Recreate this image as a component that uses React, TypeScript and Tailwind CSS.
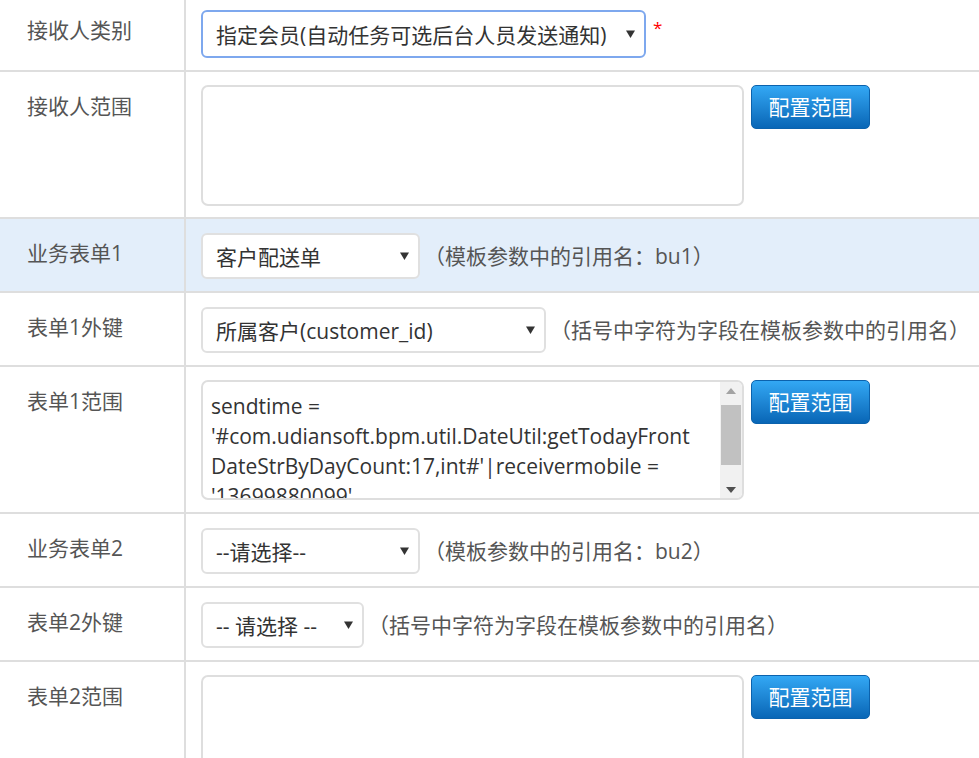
import React from 'react';

const font = "font-['Open_Sans','Noto_Sans_CJK_SC',sans-serif]";

function Arrow() {
  return (
    <svg width="9" height="8" viewBox="0 0 9 8" className="shrink-0">
      <path d="M0 0.5 L9 0.5 L4.5 8 Z" fill="#333" />
    </svg>
  );
}

function FakeSelect({ text, width, focused }: { text: string; width: string; focused?: boolean }) {
  return (
    <div
      className={`${width} ${
        focused ? 'h-[48px] border-2 border-[#7ea8ee]' : 'h-[46px] border-2 border-[#e0e0e0]'
      } flex items-center justify-between rounded-[6px] bg-white pl-[13px] pr-[9px] text-[21px] leading-[28px] text-[#333] whitespace-nowrap`}
    >
      <span className="pt-[2px]">{text}</span>
      <Arrow />
    </div>
  );
}

function ScopeButton() {
  return (
    <button className="ml-[7px] h-[44px] w-[119px] shrink-0 self-start rounded-[5px] border border-[#0b62ad] bg-gradient-to-b from-[#33a8f4] to-[#0866b6] text-[21px] leading-[28px] text-white">
      配置范围
    </button>
  );
}

function Hint({ children }: { children: React.ReactNode }) {
  return <span className="ml-[4px] whitespace-nowrap text-[21px] leading-[28px] text-[#555]">{children}</span>;
}

function Row({
  label,
  children,
  highlight,
  top = 'pt-[14px] pb-[12px]',
}: {
  label: string;
  children: React.ReactNode;
  highlight?: boolean;
  top?: string;
}) {
  return (
    <div className={`flex border-b-2 border-[#dedede] ${highlight ? 'bg-[#e3eefa]' : 'bg-white'}`}>
      <div className="w-[186px] shrink-0 border-r-2 border-[#dedede] pl-[27px] pt-[20px] text-[21px] leading-[28px] text-[#555]">
        {label}
      </div>
      <div className={`flex flex-1 items-center pl-[15px] ${top}`}>{children}</div>
    </div>
  );
}

function EmptyArea({ height }: { height: string }) {
  return <div className={`${height} w-[543px] shrink-0 rounded-[7px] border-2 border-[#dedede] bg-white`} />;
}

const scopeLines = [
  'sendtime =',
  "'#com.udiansoft.bpm.util.DateUtil:getTodayFront",
  "DateStrByDayCount:17,int#'|receivermobile =",
  "'13699880099'",
];

function ScopeArea() {
  return (
    <div className="flex h-[120px] w-[543px] shrink-0 overflow-hidden rounded-[7px] border-2 border-[#dedede] bg-white">
      <div className="flex-1 overflow-hidden pl-[8px] pt-[9px] text-[21px] leading-[30px] text-[#333]">
        {scopeLines.map((line) => (
          <div key={line} className="whitespace-pre">
            {line}
          </div>
        ))}
      </div>
      {/* scrollbar */}
      <div className="flex w-[22px] shrink-0 flex-col bg-[#f1f1f1]">
        <div className="flex h-[17px] items-center justify-center">
          <svg width="10" height="6" viewBox="0 0 10 6">
            <path d="M0 6 L10 6 L5 0 Z" fill="#a3a3a3" />
          </svg>
        </div>
        <div className="h-[6px]" />
        <div className="mx-[1px] h-[60px] bg-[#c1c1c1]" />
        <div className="flex-1" />
        <div className="flex h-[17px] items-center justify-center">
          <svg width="10" height="6" viewBox="0 0 10 6">
            <path d="M0 0 L10 0 L5 6 Z" fill="#505050" />
          </svg>
        </div>
      </div>
    </div>
  );
}

export default function App() {
  return (
    <div className={`${font} h-[758px] w-[979px] overflow-hidden bg-white`}>
      <div className="-mt-[4px]">
        <Row label="接收人类别">
          <FakeSelect text="指定会员(自动任务可选后台人员发送通知)" width="w-[445px]" focused />
          <span className="ml-[7px] self-start pt-[9px] text-[17px] leading-[17px] text-[#f00]">*</span>
        </Row>

        <Row label="接收人范围" top="pt-[13px] pb-[11px] !items-start">
          <EmptyArea height="h-[121px]" />
          <ScopeButton />
        </Row>

        <Row label="业务表单1" highlight>
          <FakeSelect text="客户配送单" width="w-[219px]" />
          <Hint>（模板参数中的引用名：bu1）</Hint>
        </Row>

        <Row label="表单1外键">
          <FakeSelect text="所属客户(customer_id)" width="w-[345px]" />
          <Hint>（括号中字符为字段在模板参数中的引用名）</Hint>
        </Row>

        <Row label="表单1范围" top="pt-[13px] pb-[12px] !items-start">
          <ScopeArea />
          <ScopeButton />
        </Row>

        <Row label="业务表单2">
          <FakeSelect text="--请选择--" width="w-[219px]" />
          <Hint>（模板参数中的引用名：bu2）</Hint>
        </Row>

        <Row label="表单2外键">
          <FakeSelect text="-- 请选择 --" width="w-[163px]" />
          <Hint>（括号中字符为字段在模板参数中的引用名）</Hint>
        </Row>

        <Row label="表单2范围" top="pt-[13px] pb-[12px] !items-start">
          <EmptyArea height="h-[121px]" />
          <ScopeButton />
        </Row>
      </div>
    </div>
  );
}
